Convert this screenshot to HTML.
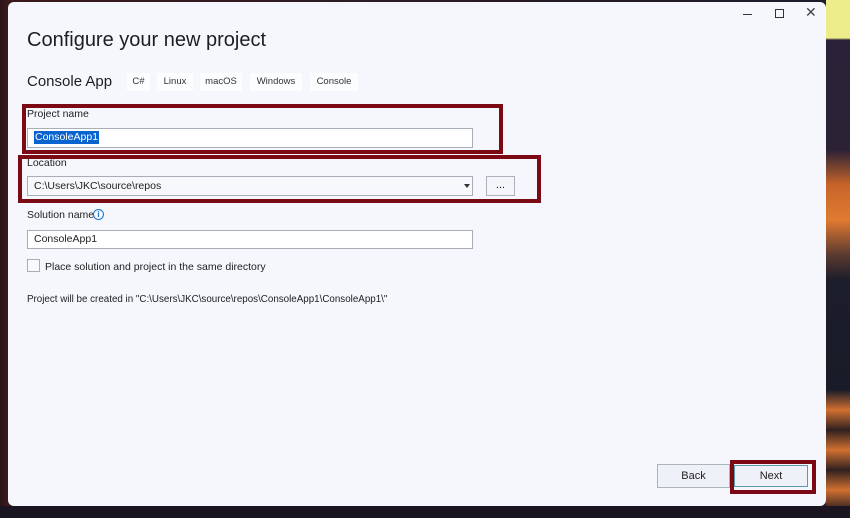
<!DOCTYPE html>
<html><head><meta charset="utf-8"><style>
*{margin:0;padding:0;box-sizing:border-box}
body{width:850px;height:518px;overflow:hidden;position:relative;font-family:"Liberation Sans",sans-serif;color:#1e1e1e;
background:linear-gradient(90deg,#2a1418 0,#3a1a1c 8px,#1d1c2c 826px,#1d1c2c 850px)}
.bgr{position:absolute;left:826px;top:0;width:24px;height:518px;background:linear-gradient(180deg,#ecec8a 0,#ecec8a 38px,#2a2238 40px,#2b2235 150px,#c8642a 185px,#e07a30 220px,#5a3a30 255px,#1c1d2a 280px,#1a1b28 390px,#d07030 410px,#302020 430px,#d07030 450px,#302020 470px,#d07030 490px,#302020 510px)}
.bgb{position:absolute;left:0;top:506px;width:850px;height:12px;background:#1a1520}
.a{position:absolute;white-space:nowrap}
.win{position:absolute;left:8px;top:2px;width:818px;height:504px;background:#f5f7fc;border-radius:6px}
.t{font-size:10.5px;line-height:13px}
.tag{position:absolute;top:73px;height:18px;background:#fcfdff;font-size:9.5px;line-height:18px;text-align:center;color:#333}
.inp{position:absolute;background:#fff;border:1px solid #a8aeb8}
.red{position:absolute;border:4px solid #7b0a14}
.btn{position:absolute;background:#eef2f8;border:1px solid #adb3bc;font-size:11px;text-align:center}
</style></head><body>
<div class="bgr"></div><div class="bgb"></div>
<div class="win"></div>
<div class="a" style="left:743px;top:14px;width:9px;height:1px;background:#333"></div>
<div class="a" style="left:775px;top:9px;width:9px;height:9px;border:1px solid #333"></div>
<div class="a" style="left:805px;top:4px;font-size:14px;color:#444">✕</div>

<div class="a" style="left:27px;top:29px;font-size:20px;color:#1e1e1e">Configure your new project</div>
<div class="a" style="left:27px;top:73px;font-size:15px">Console App</div>
<div class="tag" style="left:127px;width:23px">C#</div>
<div class="tag" style="left:157px;width:36px">Linux</div>
<div class="tag" style="left:200px;width:42px">macOS</div>
<div class="tag" style="left:250px;width:52px">Windows</div>
<div class="tag" style="left:310px;width:48px">Console</div>

<div class="red" style="left:22px;top:104px;width:481px;height:50px"></div>
<div class="a t" style="left:27px;top:108px">Project name</div>
<div class="inp" style="left:27px;top:128px;width:446px;height:20px"></div>
<div class="a t" style="left:34px;top:131px;background:#0a64d0;color:#fff;padding:0 1px">ConsoleApp1</div>

<div class="red" style="left:18px;top:155px;width:523px;height:48px"></div>
<div class="a t" style="left:27px;top:157px">Location</div>
<div class="inp" style="left:27px;top:176px;width:446px;height:20px;background:#f6f8fb"></div>
<div class="a t" style="left:34px;top:180px">C:\Users\JKC\source\repos</div>
<div class="a" style="left:464px;top:184px;border-left:3px solid transparent;border-right:3px solid transparent;border-top:4px solid #333"></div>
<div class="btn" style="left:486px;top:176px;width:29px;height:20px;line-height:16px;background:#f3f5f9">...</div>

<div class="a t" style="left:27px;top:209px">Solution name</div>
<div class="a" style="left:93px;top:209px;width:11px;height:11px;border:1px solid #1b74c8;border-radius:50%;font-size:8px;line-height:9px;text-align:center;color:#1b74c8;font-weight:bold">i</div>
<div class="inp" style="left:27px;top:230px;width:446px;height:19px"></div>
<div class="a t" style="left:34px;top:233px">ConsoleApp1</div>
<div class="a" style="left:27px;top:259px;width:13px;height:13px;border:1px solid #a8aeb8;background:#f8f9fb"></div>
<div class="a t" style="left:45px;top:261px">Place solution and project in the same directory</div>
<div class="a" style="left:27px;top:294px;font-size:9.8px">Project will be created in "C:\Users\JKC\source\repos\ConsoleApp1\ConsoleApp1\"</div>

<div class="btn" style="left:657px;top:464px;width:73px;height:24px;line-height:22px">Back</div>
<div class="red" style="left:730px;top:460px;width:86px;height:34px"></div>
<div class="btn" style="left:734px;top:465px;width:74px;height:22px;line-height:20px;border-color:#5a9ab0">Next</div>
</body></html>
